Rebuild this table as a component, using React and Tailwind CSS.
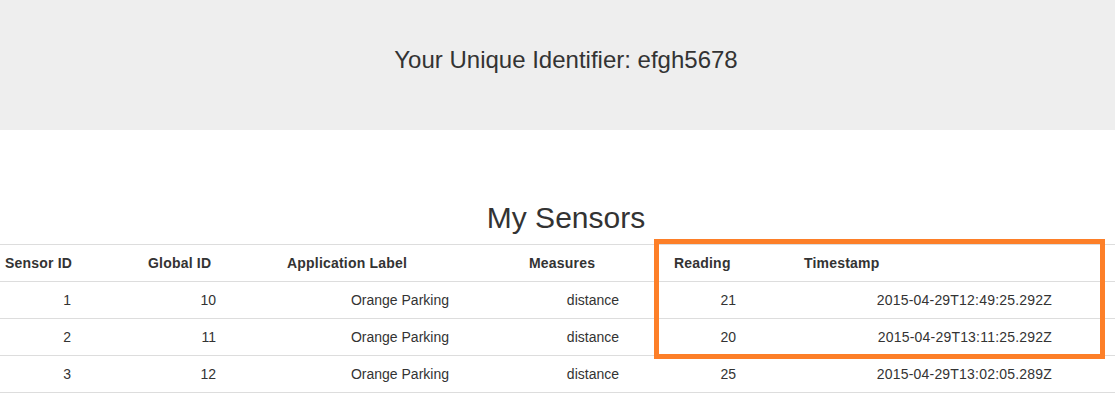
export default function App() {
  const rows = [
    { sid: 1, gid: 10, label: "Orange Parking", measures: "distance", reading: 21, ts: "2015-04-29T12:49:25.292Z" },
    { sid: 2, gid: 11, label: "Orange Parking", measures: "distance", reading: 20, ts: "2015-04-29T13:11:25.292Z" },
    { sid: 3, gid: 12, label: "Orange Parking", measures: "distance", reading: 25, ts: "2015-04-29T13:02:05.289Z" },
  ];

  const font = { fontFamily: '"Liberation Sans", Arial, sans-serif' };

  return (
    <div className="w-full overflow-hidden bg-white text-[#333]" style={font}>
      <div className="relative w-[1132px]">
        <header className="flex h-[130px] items-center justify-center bg-[#eeeeee] pb-[10px]">
          <h3 className="text-[24px] leading-[26px]">Your Unique Identifier: efgh5678</h3>
        </header>

        <h2 className="mt-[71px] mb-[10px] text-center text-[30px] leading-[33px]">My Sensors</h2>

        <table className="w-full table-fixed border-collapse text-[14px] leading-[20px]">
          <colgroup>
            <col className="w-[143px]" />
            <col className="w-[139px]" />
            <col className="w-[242px]" />
            <col className="w-[145px]" />
            <col className="w-[130px]" />
            <col />
          </colgroup>
          <thead>
            <tr className="border-t border-b border-[#dddddd]">
              {["Sensor ID", "Global ID", "Application Label", "Measures", "Reading", "Timestamp"].map((h) => (
                <th key={h} className="py-[8px] pl-[5px] text-left font-bold tracking-[0.2px]">
                  {h}
                </th>
              ))}
            </tr>
          </thead>
          <tbody>
            {rows.map((r) => (
              <tr key={r.sid} className="border-b border-[#dddddd]">
                <td className="py-[8px] pr-[72px] text-right">{r.sid}</td>
                <td className="py-[8px] pr-[66px] text-right">{r.gid}</td>
                <td className="py-[8px] pr-[75px] text-right">{r.label}</td>
                <td className="py-[8px] pr-[50px] text-right">{r.measures}</td>
                <td className="py-[8px] pr-[63px] text-right">{r.reading}</td>
                <td className="py-[8px] pr-[80px] text-right tracking-[0.2px]">{r.ts}</td>
              </tr>
            ))}
          </tbody>
        </table>

        {/* highlight frame around the Reading / Timestamp columns */}
        <div className="pointer-events-none absolute left-[654px] top-[239px] h-[120px] w-[451px] border-[5px] border-[#fd7f28]" />
      </div>
    </div>
  );
}
